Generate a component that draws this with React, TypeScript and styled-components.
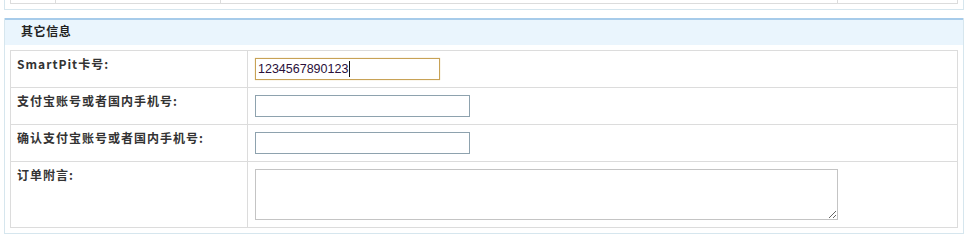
import React from 'react';
import styled, { createGlobalStyle } from 'styled-components';

const GlobalStyle = createGlobalStyle`
  body {
    margin: 0;
    background: #ffffff;
    font-family: "Noto Sans CJK SC", "Liberation Sans", sans-serif;
    font-size: 12px;
    color: #333333;
  }
`;

const Page = styled.div`
  width: 971px;
  padding: 0 0 0 4px;
  box-sizing: border-box;
`;

const PrevBox = styled.div`
  width: 960px;
  height: 10px;
  box-sizing: border-box;
  border: 1px solid #d6e6ee;
  border-top: none;
  padding: 0 5px;
`;

const PrevRow = styled.div`
  display: grid;
  grid-template-columns: 44px 165px 617px 1fr;
  height: 4px;
  border: 1px solid #dcdcdc;
  border-top: none;
  box-sizing: border-box;

  & > div + div {
    border-left: 1px solid #dcdcdc;
  }
`;

const Section = styled.div`
  width: 960px;
  margin-top: 8px;
  box-sizing: border-box;
  border: 1px solid #d6e6ee;
  border-top: none;
  padding-bottom: 5px;
`;

const SectionHead = styled.div`
  height: 25px;
  border-top: 2px solid #a6cbea;
  background: #eaf5fd;
  padding-left: 16px;
  line-height: 22px;
  font-weight: bold;
  font-size: 12px;
  letter-spacing: 0.6px;
  color: #222222;
`;

const Table = styled.table`
  margin: 5px 5px 0 5px;
  width: 948px;
  border-collapse: collapse;
  table-layout: fixed;
`;

const LabelCell = styled.td`
  width: 224px;
  border: 1px solid #dcdcdc;
  vertical-align: top;
  padding: 4px 6px 0 6px;
  font-weight: bold;
  font-size: 12px;
  letter-spacing: 1px;
  color: #333333;
  white-space: nowrap;
`;

const FieldCell = styled.td<{ $tall?: boolean }>`
  border: 1px solid #dcdcdc;
  height: ${p => (p.$tall ? 66 : 37)}px;
  vertical-align: top;
  padding: 7px 0 0 7px;
  box-sizing: border-box;
`;

const TextInput = styled.input`
  display: block;
  width: 215px;
  height: 22px;
  box-sizing: border-box;
  border: 1px solid #8ea2ae;
  padding: 0 3px;
  font-family: "Liberation Sans", Arial, sans-serif;
  font-size: 12.5px;
  outline: none;
`;

const FocusedInput = styled.div`
  display: flex;
  align-items: center;
  width: 185px;
  height: 22px;
  box-sizing: border-box;
  border: 1px solid #c8a256;
  box-shadow: 0 0 1px #e2c98e;
  padding: 0 2px;
  font-family: "Liberation Sans", Arial, sans-serif;
  font-size: 12.5px;
  color: #2a0f3a;
`;

const Caret = styled.span`
  display: inline-block;
  width: 1px;
  height: 16px;
  margin-left: 1px;
  background: #111111;
`;

const Memo = styled.textarea`
  display: block;
  width: 583px;
  height: 51px;
  box-sizing: border-box;
  border: 1px solid #c4c4c4;
  font-family: "Liberation Sans", Arial, sans-serif;
  font-size: 13px;
  outline: none;
`;

export default function App() {
  return (
    <Page>
      <GlobalStyle />
      <PrevBox>
        <PrevRow>
          <div />
          <div />
          <div />
          <div />
        </PrevRow>
      </PrevBox>
      <Section>
        <SectionHead>其它信息</SectionHead>
        <Table>
          <tbody>
            <tr>
              <LabelCell>SmartPit卡号:</LabelCell>
              <FieldCell>
                <FocusedInput>
                  1234567890123
                  <Caret />
                </FocusedInput>
              </FieldCell>
            </tr>
            <tr>
              <LabelCell>支付宝账号或者国内手机号:</LabelCell>
              <FieldCell>
                <TextInput type="text" />
              </FieldCell>
            </tr>
            <tr>
              <LabelCell>确认支付宝账号或者国内手机号:</LabelCell>
              <FieldCell>
                <TextInput type="text" />
              </FieldCell>
            </tr>
            <tr>
              <LabelCell>订单附言:</LabelCell>
              <FieldCell $tall>
                <Memo />
              </FieldCell>
            </tr>
          </tbody>
        </Table>
      </Section>
    </Page>
  );
}
